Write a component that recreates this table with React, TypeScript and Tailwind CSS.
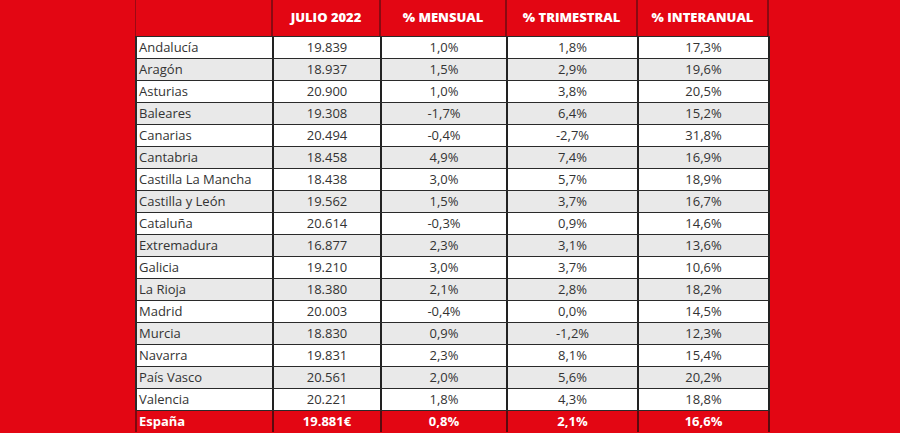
import React from "react";

const rows: [string, string, string, string, string][] = [
  ["Andalucía", "19.839", "1,0%", "1,8%", "17,3%"],
  ["Aragón", "18.937", "1,5%", "2,9%", "19,6%"],
  ["Asturias", "20.900", "1,0%", "3,8%", "20,5%"],
  ["Baleares", "19.308", "-1,7%", "6,4%", "15,2%"],
  ["Canarias", "20.494", "-0,4%", "-2,7%", "31,8%"],
  ["Cantabria", "18.458", "4,9%", "7,4%", "16,9%"],
  ["Castilla La Mancha", "18.438", "3,0%", "5,7%", "18,9%"],
  ["Castilla y León", "19.562", "1,5%", "3,7%", "16,7%"],
  ["Cataluña", "20.614", "-0,3%", "0,9%", "14,6%"],
  ["Extremadura", "16.877", "2,3%", "3,1%", "13,6%"],
  ["Galicia", "19.210", "3,0%", "3,7%", "10,6%"],
  ["La Rioja", "18.380", "2,1%", "2,8%", "18,2%"],
  ["Madrid", "20.003", "-0,4%", "0,0%", "14,5%"],
  ["Murcia", "18.830", "0,9%", "-1,2%", "12,3%"],
  ["Navarra", "19.831", "2,3%", "8,1%", "15,4%"],
  ["País Vasco", "20.561", "2,0%", "5,6%", "20,2%"],
  ["Valencia", "20.221", "1,8%", "4,3%", "18,8%"],
];

const widths = ["w-[137px]", "w-[108px]", "w-[126px]", "w-[131px]", "w-[131px]"];

export default function App() {
  return (
    <div
      className="w-[900px] h-[433px] bg-[#e30613] overflow-hidden flex justify-start"
      style={{ fontFamily: '"Open Sans", "Noto Sans", sans-serif' }}
    >
      <div className="ml-[135px] flex flex-col">
        <div className="flex h-[36px] border-l border-[#9b0a14]">
          {["", "JULIO 2022", "% MENSUAL", "% TRIMESTRAL", "% INTERANUAL"].map((h, i) => (
            <div
              key={i}
              className={`${widths[i]} h-full flex items-center justify-center text-white font-extrabold text-[13px] border-r-2 border-[#8a0a12]`}
            >
              {h}
            </div>
          ))}
        </div>
        {rows.map((r, ri) => (
          <div
            key={ri}
            className={`flex h-[22px] border-t border-[#2a2a2a] border-l-2 ${ri % 2 === 1 ? "bg-[#e9e9e9]" : "bg-white"}`}
          >
            {r.map((c, ci) => (
              <div
                key={ci}
                className={`${widths[ci]} h-full flex items-center text-[13px] text-[#333] border-r-2 border-[#222] ${ci === 0 ? "justify-start pl-[2px]" : "justify-center"}`}
              >
                {c}
              </div>
            ))}
          </div>
        ))}
        <div className="flex h-[22px] border-t border-[#2a2a2a] border-l-2 border-l-[#7a0a10] bg-[#e30613]">
          {["España", "19.881€", "0,8%", "2,1%", "16,6%"].map((c, ci) => (
            <div
              key={ci}
              className={`${widths[ci]} h-full flex items-center text-[13px] text-white font-bold border-r-2 border-[#5a0a0e] ${ci === 0 ? "justify-start pl-[2px]" : "justify-center"}`}
            >
              {c}
            </div>
          ))}
        </div>
      </div>
    </div>
  );
}
